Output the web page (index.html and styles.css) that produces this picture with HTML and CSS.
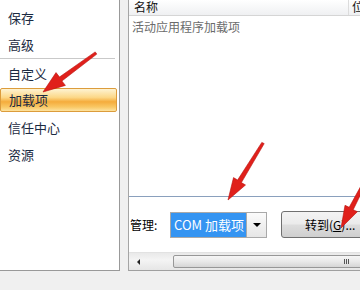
FILE: index.html
```html
<!DOCTYPE html>
<html lang="zh-CN">
<head>
    <meta charset="UTF-8">
    <title>加载项</title>
    <link rel="stylesheet" href="styles.css">
</head>
<body>
    <div class="window">
        <!-- menu on the left -->
        <nav class="nav">
            <div class="nav-item">保存</div>
            <div class="nav-item">高级</div>
            <div class="nav-sep"></div>
            <div class="nav-item">自定义</div>
            <div class="nav-item active">加载项</div>
            <div class="nav-item">信任中心</div>
            <div class="nav-item">资源</div>
        </nav>

        <section class="pane">
            <div class="list">
                <div class="list-head">
                    <span class="col-name">名称</span>
                    <span class="col-loc">位</span>
                </div>
                <div class="group">活动应用程序加载项</div>
            </div>

            <div class="manage">
                <label class="manage-label">管理:</label>
                <div class="combo">
                    <span class="combo-value">COM 加载项</span>
                    <span class="combo-btn"><span class="tri-down"></span></span>
                </div>
                <button class="go">转到(<u>G</u>)...</button>
            </div>

            <div class="hscroll">
                <span class="tri-left"></span>
                <div class="thumb"><span class="grip"></span></div>
            </div>
        </section>
    </div>

    <!-- red arrows drawn over the screenshot -->
    <svg class="arrows" width="360" height="290" viewBox="0 0 360 290">
        <polygon points="95.2,51.9 59.5,77 56,72.6 43,92 65.4,85.4 61.9,81 96.8,54.1" />
        <polygon points="261.8,142.4 237.6,180 233.5,177.6 228,200 245.5,185 241.4,182.6 264.2,143.6" />
        <polygon points="364.6,179.2 349.2,207.3 345,205.3 341,228 357.4,211.7 353.2,209.7 367.4,180.8" />
    </svg>
</body>
</html>
```

FILE: styles.css
```css
body {
    margin: 0;
    width: 360px;
    height: 290px;
    overflow: hidden;
    position: relative;
    background-color: #f0f0f0;
    font-family: "Noto Sans CJK SC", "Liberation Sans", sans-serif;
}

.window {
    display: flex;
    height: 271px;
}

/* left menu */
.nav {
    width: 120px;
    box-sizing: border-box;
    padding-top: 4px;
    background-color: #fff;
    border-right: 1px solid #999;
    border-bottom: 1px solid #999;
}

.nav-item {
    height: 27px;
    line-height: 27px;
    padding-left: 8px;
    font-size: 13px;
    color: #1b2a42;
}

.nav-sep {
    height: 1px;
    margin-right: 4px;
    background-color: #c9c9c9;
    border-bottom: 1px solid #fff;
}

.nav-item.active {
    height: 24px;
    line-height: 22px;
    margin: 1px 2px 2px 0;
    box-sizing: border-box;
    border: 1px solid #dc9c3c;
    border-radius: 2px;
    background: linear-gradient(#fef3d2 0%, #fcd888 38%, #f5ac3c 58%, #f9c865 82%, #fde3a0 100%);
}

/* right pane */
.pane {
    flex: 1;
    min-width: 0;
    margin-left: 8px;
    display: flex;
    flex-direction: column;
    background-color: #fff;
    border-left: 1px solid #a5a5a5;
    border-bottom: 1px solid #a0a0a0;
    overflow: hidden;
}

.list {
    height: 196px;
    border-bottom: 1px solid #8aa0bd;
}

.list-head {
    display: flex;
    height: 16px;
    box-sizing: border-box;
    font-size: 12px;
    line-height: 14px;
    color: #111;
    background: linear-gradient(#ffffff, #eff0f2);
    border-bottom: 1px solid #d5d5d5;
}

.col-name {
    width: 214px;
    flex-shrink: 0;
    padding-left: 5px;
    border-right: 1px solid #dcdcdc;
}

.col-loc {
    padding-left: 3px;
}

.group {
    padding: 4px 0 0 3px;
    font-size: 12px;
    line-height: 14px;
    color: #6b6b6b;
}

/* manage row */
.manage {
    height: 55px;
    display: flex;
    align-items: center;
}

.manage-label {
    width: 40px;
    flex-shrink: 0;
    padding-left: 1px;
    font-size: 12px;
    color: #000;
}

.combo {
    display: flex;
    width: 97px;
    height: 26px;
    flex-shrink: 0;
    box-sizing: border-box;
    border: 1px solid #a9a9a9;
    background-color: #fff;
}

.combo-value {
    flex: 1;
    padding-left: 3px;
    line-height: 24px;
    font-size: 13px;
    color: #fff;
    background-color: #3494f2;
}

.combo-btn {
    width: 19px;
    display: flex;
    align-items: center;
    justify-content: center;
    border-left: 1px solid #a9a9a9;
    background: linear-gradient(#fbfbfb, #e6e6e6);
}

.tri-down {
    width: 0;
    height: 0;
    border-left: 4px solid transparent;
    border-right: 4px solid transparent;
    border-top: 4px solid #000;
}

.go {
    width: 90px;
    height: 27px;
    flex-shrink: 0;
    margin-left: 14px;
    padding: 0 0 0 23px;
    text-align: left;
    white-space: nowrap;
    font-family: "Noto Sans CJK SC", "Liberation Sans", sans-serif;
    font-size: 12px;
    color: #000;
    border: 1px solid #707070;
    border-radius: 3px;
    background: linear-gradient(#f3f3f3 0%, #ebebeb 48%, #dddddd 52%, #cfcfcf 100%);
}

/* horizontal scrollbar */
.hscroll {
    height: 18px;
    display: flex;
    align-items: center;
    background: linear-gradient(#e9e9e9, #f4f4f4 40%, #e6e6e6);
    border-top: 1px solid #e2e2e2;
    box-sizing: border-box;
}

.tri-left {
    width: 0;
    height: 0;
    margin: 0 33px 0 8px;
    border-top: 3px solid transparent;
    border-bottom: 3px solid transparent;
    border-right: 3px solid #222;
}

.thumb {
    width: 346px;
    height: 13px;
    flex-shrink: 0;
    box-sizing: border-box;
    border: 1px solid #979797;
    border-radius: 2px;
    background: linear-gradient(#f6f6f6, #e9e9e9 50%, #d6d6d6);
    display: flex;
    align-items: center;
    justify-content: center;
}

.grip {
    width: 5px;
    height: 5px;
    background: repeating-linear-gradient(90deg, #555 0 1px, transparent 1px 2px);
}

.arrows {
    position: absolute;
    top: 0;
    left: 0;
    pointer-events: none;
}

.arrows polygon {
    fill: #e0201b;
    stroke: #b8100e;
    stroke-width: 0.6;
}
```
